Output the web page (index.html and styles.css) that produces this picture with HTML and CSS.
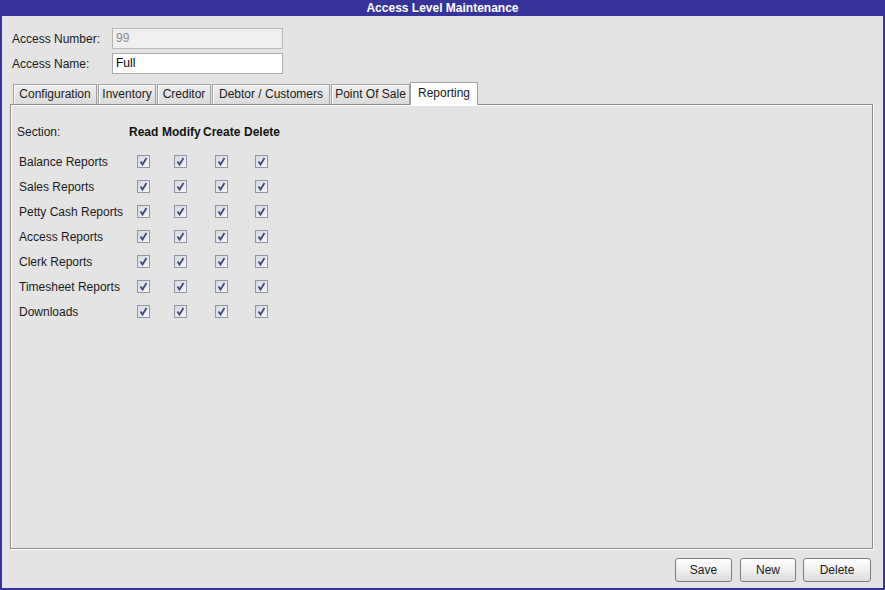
FILE: index.html
```html
<!DOCTYPE html>
<html>
<head>
<meta charset="utf-8">
<link rel="stylesheet" href="styles.css">
</head>
<body>
<div class="window">
  <div class="titlebar">Access Level Maintenance</div>
  <div class="content">
    <div class="fields">
      <div class="field-row">
        <label class="field-label">Access Number:</label>
        <div class="input disabled">99</div>
      </div>
      <div class="field-row">
        <label class="field-label">Access Name:</label>
        <div class="input">Full</div>
      </div>
    </div>
    <div class="tabs">
      <div class="tab t1">Configuration</div>
      <div class="tab t2">Inventory</div>
      <div class="tab t3">Creditor</div>
      <div class="tab t4">Debtor / Customers</div>
      <div class="tab t5">Point Of Sale</div>
      <div class="tab active">Reporting</div>
    </div>
    <div class="panel">
      <div class="grid">
        <div class="head head-label">Section:</div>
        <div class="head col-head">Read</div>
        <div class="head col-head">Modify</div>
        <div class="head col-head">Create</div>
        <div class="head col-head">Delete</div>

        <div class="row-label">Balance Reports</div>
        <span class="cb"><svg viewBox="0 0 11 11"><path d="M2.5 5.5 L4.5 8.5 L8.5 2"/></svg></span>
        <span class="cb"><svg viewBox="0 0 11 11"><path d="M2.5 5.5 L4.5 8.5 L8.5 2"/></svg></span>
        <span class="cb"><svg viewBox="0 0 11 11"><path d="M2.5 5.5 L4.5 8.5 L8.5 2"/></svg></span>
        <span class="cb"><svg viewBox="0 0 11 11"><path d="M2.5 5.5 L4.5 8.5 L8.5 2"/></svg></span>

        <div class="row-label">Sales Reports</div>
        <span class="cb"><svg viewBox="0 0 11 11"><path d="M2.5 5.5 L4.5 8.5 L8.5 2"/></svg></span>
        <span class="cb"><svg viewBox="0 0 11 11"><path d="M2.5 5.5 L4.5 8.5 L8.5 2"/></svg></span>
        <span class="cb"><svg viewBox="0 0 11 11"><path d="M2.5 5.5 L4.5 8.5 L8.5 2"/></svg></span>
        <span class="cb"><svg viewBox="0 0 11 11"><path d="M2.5 5.5 L4.5 8.5 L8.5 2"/></svg></span>

        <div class="row-label">Petty Cash Reports</div>
        <span class="cb"><svg viewBox="0 0 11 11"><path d="M2.5 5.5 L4.5 8.5 L8.5 2"/></svg></span>
        <span class="cb"><svg viewBox="0 0 11 11"><path d="M2.5 5.5 L4.5 8.5 L8.5 2"/></svg></span>
        <span class="cb"><svg viewBox="0 0 11 11"><path d="M2.5 5.5 L4.5 8.5 L8.5 2"/></svg></span>
        <span class="cb"><svg viewBox="0 0 11 11"><path d="M2.5 5.5 L4.5 8.5 L8.5 2"/></svg></span>

        <div class="row-label">Access Reports</div>
        <span class="cb"><svg viewBox="0 0 11 11"><path d="M2.5 5.5 L4.5 8.5 L8.5 2"/></svg></span>
        <span class="cb"><svg viewBox="0 0 11 11"><path d="M2.5 5.5 L4.5 8.5 L8.5 2"/></svg></span>
        <span class="cb"><svg viewBox="0 0 11 11"><path d="M2.5 5.5 L4.5 8.5 L8.5 2"/></svg></span>
        <span class="cb"><svg viewBox="0 0 11 11"><path d="M2.5 5.5 L4.5 8.5 L8.5 2"/></svg></span>

        <div class="row-label">Clerk Reports</div>
        <span class="cb"><svg viewBox="0 0 11 11"><path d="M2.5 5.5 L4.5 8.5 L8.5 2"/></svg></span>
        <span class="cb"><svg viewBox="0 0 11 11"><path d="M2.5 5.5 L4.5 8.5 L8.5 2"/></svg></span>
        <span class="cb"><svg viewBox="0 0 11 11"><path d="M2.5 5.5 L4.5 8.5 L8.5 2"/></svg></span>
        <span class="cb"><svg viewBox="0 0 11 11"><path d="M2.5 5.5 L4.5 8.5 L8.5 2"/></svg></span>

        <div class="row-label">Timesheet Reports</div>
        <span class="cb"><svg viewBox="0 0 11 11"><path d="M2.5 5.5 L4.5 8.5 L8.5 2"/></svg></span>
        <span class="cb"><svg viewBox="0 0 11 11"><path d="M2.5 5.5 L4.5 8.5 L8.5 2"/></svg></span>
        <span class="cb"><svg viewBox="0 0 11 11"><path d="M2.5 5.5 L4.5 8.5 L8.5 2"/></svg></span>
        <span class="cb"><svg viewBox="0 0 11 11"><path d="M2.5 5.5 L4.5 8.5 L8.5 2"/></svg></span>

        <div class="row-label">Downloads</div>
        <span class="cb"><svg viewBox="0 0 11 11"><path d="M2.5 5.5 L4.5 8.5 L8.5 2"/></svg></span>
        <span class="cb"><svg viewBox="0 0 11 11"><path d="M2.5 5.5 L4.5 8.5 L8.5 2"/></svg></span>
        <span class="cb"><svg viewBox="0 0 11 11"><path d="M2.5 5.5 L4.5 8.5 L8.5 2"/></svg></span>
        <span class="cb"><svg viewBox="0 0 11 11"><path d="M2.5 5.5 L4.5 8.5 L8.5 2"/></svg></span>
      </div>
    </div>
    <div class="buttons">
      <button class="btn save">Save</button>
      <button class="btn new">New</button>
      <button class="btn del">Delete</button>
    </div>
  </div>
</div>
</body>
</html>
```

FILE: styles.css
```css
html, body {
  margin: 0;
  padding: 0;
}
body {
  font-family: "Liberation Sans", Arial, sans-serif;
  font-size: 12px;
  color: #1a1a1a;
  background: #e4e4e4;
}
.window {
  width: 885px;
  height: 590px;
  box-sizing: border-box;
  border: 2px solid #36339a;
  border-top: 0;
  display: flex;
  flex-direction: column;
  background: #e4e4e4;
}
.titlebar {
  height: 16px;
  line-height: 16px;
  background: #36339a;
  color: #fff;
  font-weight: bold;
  text-align: center;
  font-size: 12px;
  flex: none;
}
.content {
  flex: 1;
  display: flex;
  flex-direction: column;
  padding: 12px 10px 6px 8px;
}
.fields {
  display: flex;
  flex-direction: column;
  gap: 4px;
  padding-left: 2px;
}
.field-row {
  display: flex;
  align-items: center;
  height: 21px;
}
.field-label {
  width: 100px;
  color: #1a1a1a;
}
.input {
  width: 166px;
  height: 19px;
  line-height: 19px;
  border: 1px solid #a5acb5;
  background: #fff;
  padding-left: 3px;
  color: #000;
}
.input.disabled {
  background: #efefef;
  color: #8d8d8d;
  border-color: #b8b8b8;
}
.tabs {
  display: flex;
  align-items: flex-end;
  margin-top: 8px;
  padding-left: 3px;
  gap: 1px;
  height: 22px;
}
.tab {
  box-sizing: border-box;
  height: 20px;
  line-height: 19px;
  padding: 0;
  white-space: nowrap;
  border: 1px solid #a0a0a0;
  border-bottom: 0;
  background: linear-gradient(#eeeeee, #dadada);
  box-shadow: inset 1px 1px 0 #fff;
  color: #1a1a1a;
  text-align: center;
  flex: none;
}
.t1 { width: 84px; }
.t2 { width: 58px; }
.t3 { width: 54px; }
.t4 { width: 118px; }
.t5 { width: 79px; }
.tab.active {
  height: 23px;
  line-height: 21px;
  width: 68px;
  background: #fff;
  margin-bottom: -1px;
  position: relative;
  z-index: 1;
  margin-left: -1px;
}
.panel {
  flex: 1;
  border: 1px solid #8c8c8c;
  box-shadow: 1px 1px 0 #fff, inset 1px 1px 0 #fff;
  background: #e4e4e4;
  padding: 20px 0 0 6px;
}
.grid {
  display: grid;
  grid-template-columns: 109px 30px 38px 38px 36px;
  column-gap: 3px;
  grid-template-rows: 24px;
  grid-auto-rows: 25px;
  align-items: center;
}
.head {
  align-self: start;
  line-height: 14px;
}
.col-head {
  font-weight: bold;
  color: #111;
  white-space: nowrap;
}
.row-label {
  padding-left: 2px;
}
.cb {
  justify-self: center;
  width: 11px;
  height: 11px;
  border: 1px solid #8e96a6;
  background: linear-gradient(135deg, #d4d8e0, #f7f7f9);
  display: block;
  position: relative;
  left: -1px;
}
.cb svg {
  display: block;
  width: 11px;
  height: 11px;
}
.cb path {
  fill: none;
  stroke: #3d4a7a;
  stroke-width: 1.8;
}
.buttons {
  display: flex;
  justify-content: flex-end;
  gap: 7px;
  padding-top: 9px;
  padding-right: 2px;
}
.btn {
  height: 24px;
  font-family: "Liberation Sans", Arial, sans-serif;
  font-size: 12px;
  color: #1a1a1a;
  border: 1px solid #7c7c7c;
  border-radius: 3px;
  background: linear-gradient(#ffffff, #f1f1f1 45%, #dcdcdc);
  padding: 0;
}
.btn.save { width: 57px; margin-right: 1px; }
.btn.new { width: 56px; }
.btn.del { width: 68px; }
```
